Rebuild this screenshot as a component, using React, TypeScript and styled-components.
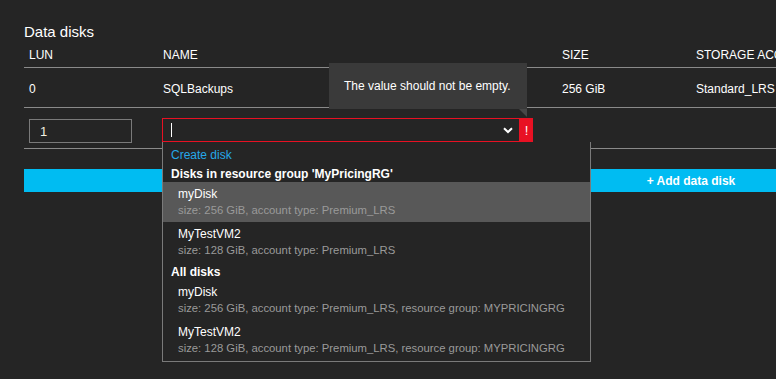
import React from 'react';
import styled, { createGlobalStyle } from 'styled-components';

const COLORS = {
  page: '#252525',
  line: '#8a8a8a',
  text: '#ffffff',
  muted: '#9a9a9a',
  error: '#e81123',
  accent: '#00bcf2',
  link: '#26a8e8',
  tooltip: '#3a3a3a',
  hover: '#585858',
  inputBorder: '#7a7a7a',
};

const GlobalStyle = createGlobalStyle`
  html {
    overflow: hidden;
    background: ${COLORS.page};
  }
  body {
    margin: 0;
    padding: 0;
    min-height: 100vh;
    background: ${COLORS.page};
    font-family: 'Liberation Sans', Arial, sans-serif;
    color: ${COLORS.text};
  }
`;

const Page = styled.div`
  box-sizing: border-box;
  width: 1358px;
  padding: 23px 0 0 24px;
`;

const Title = styled.h2`
  margin: 0 0 1px;
  font-size: 15px;
  font-weight: normal;
  line-height: 18px;
`;

const Grid = styled.div`
  display: grid;
  grid-template-columns: 134px 399px 134px 1fr;
`;

const HeaderCell = styled.div`
  height: 25px;
  display: flex;
  align-items: center;
  padding-left: 5px;
  font-size: 12px;
  border-bottom: 1px solid ${COLORS.line};
`;

const Cell = styled.div<{ $pad?: number }>`
  height: 40px;
  display: flex;
  align-items: center;
  padding-left: ${(p) => p.$pad ?? 5}px;
  padding-top: 2px;
  box-sizing: border-box;
  font-size: 12px;
  border-bottom: 1px solid ${COLORS.line};
  position: relative;
`;

const EditCell = styled(Cell)<{ $top: number }>`
  align-items: flex-start;
  height: 41px;
  padding-top: ${(p) => p.$top}px;
`;

const LunInput = styled.div`
  box-sizing: border-box;
  width: 103px;
  height: 24px;
  border: 1px solid ${COLORS.inputBorder};
  display: flex;
  align-items: center;
  padding-left: 10px;
  font-size: 13px;
  color: #f2efe0;
`;

const SelectWrap = styled.div`
  display: flex;
  height: 24px;
`;

const SelectBox = styled.div`
  box-sizing: border-box;
  width: 358px;
  height: 24px;
  border: 1px solid ${COLORS.error};
  display: flex;
  align-items: center;
  justify-content: space-between;
  padding: 0 6px 0 8px;
`;

const Caret = styled.span`
  width: 1px;
  height: 14px;
  background: ${COLORS.text};
`;

const ErrorFlag = styled.div`
  width: 13px;
  height: 24px;
  background: ${COLORS.error};
  display: flex;
  align-items: center;
  justify-content: center;
  font-size: 13px;
`;

const Tooltip = styled.div`
  position: absolute;
  left: 171px;
  top: -45px;
  width: 198px;
  height: 46px;
  background: ${COLORS.tooltip};
  box-sizing: border-box;
  padding-left: 15px;
  display: flex;
  align-items: center;
  font-size: 12px;
  z-index: 3;
  &::after {
    content: '';
    position: absolute;
    right: 0;
    bottom: -8px;
    border-left: 8px solid transparent;
    border-top: 8px solid #474747;
  }
`;

const Dropdown = styled.div`
  position: absolute;
  left: 4px;
  top: 34px;
  width: 429px;
  box-sizing: border-box;
  background: ${COLORS.page};
  border: 1px solid ${COLORS.inputBorder};
  border-top: none;
  z-index: 2;
  padding-bottom: 1px;
`;

const CreateLink = styled.div`
  color: ${COLORS.link};
  font-size: 12px;
  height: 22px;
  padding: 3px 0 0 8px;
  box-sizing: border-box;
  display: flex;
  align-items: center;
`;

const GroupHeader = styled.div`
  font-size: 12px;
  font-weight: bold;
  height: 18px;
  padding: 2px 0 0 8px;
  box-sizing: border-box;
  display: flex;
  align-items: center;
`;

const Option = styled.div<{ $active?: boolean }>`
  height: 40px;
  padding: 4px 0 0 15px;
  box-sizing: border-box;
  background: ${(p) => (p.$active ? COLORS.hover : 'transparent')};
`;

const OptionName = styled.div`
  font-size: 12px;
  line-height: 16px;
`;

const OptionMeta = styled.div`
  font-size: 11.3px;
  line-height: 17px;
  color: ${COLORS.muted};
`;

const AddButton = styled.div`
  margin-top: 20px;
  height: 23px;
  background: ${COLORS.accent};
  display: flex;
  align-items: center;
  justify-content: center;
  font-size: 12px;
  font-weight: bold;
`;

const ChevronDown = () => (
  <svg width="10" height="7" viewBox="0 0 10 7">
    <path d="M1 1.2 L5 5 L9 1.2" fill="none" stroke="#fff" strokeWidth="2" />
  </svg>
);

const rgDisks = [
  { name: 'myDisk', size: '256 GiB', type: 'Premium_LRS' },
  { name: 'MyTestVM2', size: '128 GiB', type: 'Premium_LRS' },
];

const App: React.FC = () => {
  return (
    <>
      <GlobalStyle />
      <Page>
        <Title>Data disks</Title>
        <Grid>
          <HeaderCell>LUN</HeaderCell>
          <HeaderCell>NAME</HeaderCell>
          <HeaderCell>SIZE</HeaderCell>
          <HeaderCell>STORAGE ACCOUNT TYPE</HeaderCell>

          <Cell>0</Cell>
          <Cell>SQLBackups</Cell>
          <Cell>256 GiB</Cell>
          <Cell>Standard_LRS</Cell>

          <EditCell $top={11}>
            <LunInput>1</LunInput>
          </EditCell>
          <EditCell $top={10} $pad={4}>
            <Tooltip>The value should not be empty.</Tooltip>
            <SelectWrap>
              <SelectBox>
                <Caret />
                <ChevronDown />
              </SelectBox>
              <ErrorFlag>!</ErrorFlag>
            </SelectWrap>
            <Dropdown>
              <CreateLink>Create disk</CreateLink>
              <GroupHeader>Disks in resource group 'MyPricingRG'</GroupHeader>
              {rgDisks.map((d, i) => (
                <Option key={d.name} $active={i === 0}>
                  <OptionName>{d.name}</OptionName>
                  <OptionMeta>{`size: ${d.size}, account type: ${d.type}`}</OptionMeta>
                </Option>
              ))}
              <GroupHeader>All disks</GroupHeader>
              {rgDisks.map((d) => (
                <Option key={d.name}>
                  <OptionName>{d.name}</OptionName>
                  <OptionMeta>
                    {`size: ${d.size}, account type: ${d.type}, resource group: MYPRICINGRG`}
                  </OptionMeta>
                </Option>
              ))}
            </Dropdown>
          </EditCell>
          <EditCell $top={10} />
          <EditCell $top={10} />
        </Grid>
        <AddButton>+ Add data disk</AddButton>
      </Page>
    </>
  );
};

export default App;
